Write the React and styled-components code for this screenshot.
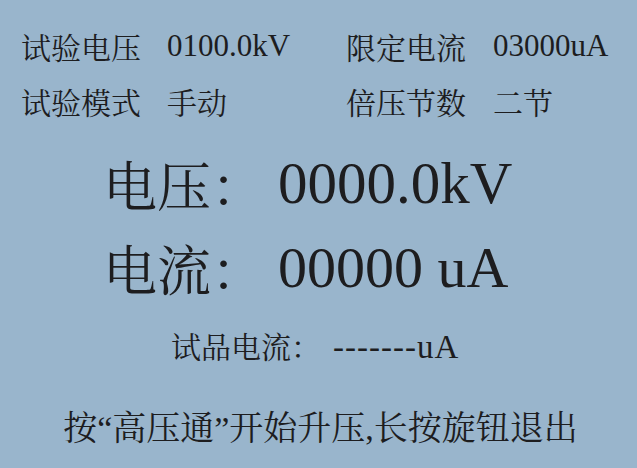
import React from "react";
import styled, { createGlobalStyle } from "styled-components";

const GlobalStyle = createGlobalStyle`
  html, body {
    margin: 0;
    padding: 0;
    background: #99b5cc;
  }
`;

// latin first so digits and curly quotes stay narrow, CJK after it
const FONT = `"Liberation Serif", "Noto Serif CJK SC", "Source Han Serif SC", "Noto Sans CJK SC", serif`;

const Screen = styled.div`
  width: 637px;
  height: 468px;
  box-sizing: border-box;
  padding-top: 18px;
  background: #99b5cc;
  color: #1d1d1f;
  font-family: ${FONT};
  display: flex;
  flex-direction: column;
  overflow: hidden;
`;

const InfoGrid = styled.div`
  display: grid;
  grid-template-columns: 146px 179px 147px 1fr;
  grid-auto-rows: 55px;
  padding-left: 21px;
  align-items: center;
`;

const Label = styled.span`
  font-size: ${(p) => p.size || 30}px;
  white-space: nowrap;
`;

const Value = styled.span`
  font-size: ${(p) => p.size || 31}px;
  letter-spacing: ${(p) => p.track || 0}px;
  margin-left: ${(p) => p.gap || 0}px;
  white-space: nowrap;
`;

const BigBlock = styled.div`
  margin-top: 13px;
  display: flex;
  flex-direction: column;
  padding-left: 103px;
`;

const BigRow = styled.div`
  height: 84px;
  display: grid;
  grid-template-columns: 175px 1fr;
  align-items: center;
`;

const SampleRow = styled.div`
  margin-top: 18px;
  height: 40px;
  display: flex;
  align-items: baseline;
  line-height: 40px;
  padding-left: 171px;
`;

const Hint = styled.div`
  margin-top: 42px;
  height: 40px;
  line-height: 40px;
  text-align: center;
  font-size: 34px;
  white-space: nowrap;
  padding-left: 4px;
`;

const info = [
  ["试验电压", "0100.0kV"],
  ["限定电流", "03000uA"],
  ["试验模式", "手动"],
  ["倍压节数", "二节"],
];

export default function App() {
  return (
    <>
      <GlobalStyle />
      <Screen>
        <InfoGrid>
          {info.map(([k, v]) => (
            <React.Fragment key={k}>
              <Label>{k}</Label>
              {/^[0-9]/.test(v) ? <Value>{v}</Value> : <Label>{v}</Label>}
            </React.Fragment>
          ))}
        </InfoGrid>

        <BigBlock>
          <BigRow>
            <Label size={54}>电压：</Label>
            <Value size={59}>0000.0kV</Value>
          </BigRow>
          <BigRow>
            <Label size={54}>电流：</Label>
            <Value size={58}>00000 uA</Value>
          </BigRow>
        </BigBlock>

        <SampleRow>
          <Label>试品电流：</Label>
          <Value size={33} track={1} gap={12}>-------uA</Value>
        </SampleRow>

        <Hint>按“高压通”开始升压,长按旋钮退出</Hint>
      </Screen>
    </>
  );
}
